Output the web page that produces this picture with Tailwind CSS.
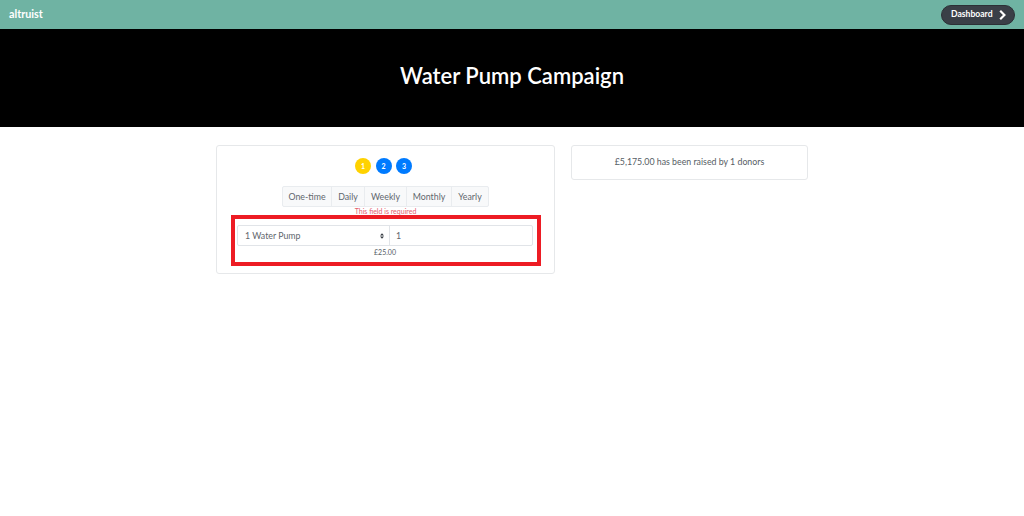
<!DOCTYPE html>
<html lang="en">
<head>
    <meta charset="UTF-8" />
    <meta name="viewport" content="width=device-width, initial-scale=1" />
    <title>Water Pump Campaign</title>
    <script src="https://cdn.jsdelivr.net/npm/@tailwindcss/browser@4"></script>
</head>
<body class="bg-white h-[516px] overflow-hidden font-['Lato','Noto_Sans',sans-serif] text-[#565d64]">

<!-- Barre du haut -->
<nav class="h-[29px] bg-[#6fb3a3] flex items-center justify-between pl-[9px] pr-[9px]">
    <a class="text-white font-bold text-[10.8px]">altruist</a>
    <a class="h-[20px] w-[74px] rounded-full bg-[#3a3f47] border border-[#2c3036] text-white text-[8.6px] font-bold flex items-center pl-[9px] gap-[6px]">
        Dashboard
        <svg width="7" height="10" viewBox="0 0 7 10" fill="none" stroke="white" stroke-width="2.2"><path d="M1.2 0.8 L5.4 5 L1.2 9.2" /></svg>
    </a>
</nav>

<!-- Titre -->
<header class="h-[98px] bg-black flex items-center justify-center pb-[5px]">
    <h1 class="text-white text-[22px] font-semibold">Water Pump Campaign</h1>
</header>

<main class="flex items-start pt-[18px] pl-[216px] gap-[16px]">
    <section class="w-[339px] h-[129px] border border-[#e6e8ea] rounded-[3px] flex flex-col items-center pt-[12px]">
        <div class="flex gap-[4.5px] mr-[4px]">
            <span class="w-[16px] h-[16px] rounded-full bg-[#ffd200] text-white text-[7px] font-bold flex items-center justify-center">1</span>
            <span class="w-[16px] h-[16px] rounded-full bg-[#007bff] text-white text-[7px] font-bold flex items-center justify-center">2</span>
            <span class="w-[16px] h-[16px] rounded-full bg-[#007bff] text-white text-[7px] font-bold flex items-center justify-center">3</span>
        </div>
        <div class="flex mt-[12px] h-[21px] border border-[#e9ecef] rounded-[2px] bg-[#f8f9fa] text-[8.8px] text-[#5f666d]">
            <span class="w-[49px] flex items-center justify-center border-r border-[#e9ecef]">One-time</span>
            <span class="w-[33px] flex items-center justify-center border-r border-[#e9ecef]">Daily</span>
            <span class="w-[42px] flex items-center justify-center border-r border-[#e9ecef]">Weekly</span>
            <span class="w-[45px] flex items-center justify-center border-r border-[#e9ecef]">Monthly</span>
            <span class="w-[36px] flex items-center justify-center">Yearly</span>
        </div>
        <p class="text-[7px] text-[#e4606d] leading-[8px]">This field is required</p>
        <div class="w-[310px] h-[51px] self-start ml-[14px] border-[4px] border-[#ed1c24] flex flex-col items-center pl-[2px] pr-[4px] pt-[6px]">
            <div class="w-full h-[21px] flex border border-[#e1e4e8] rounded-[2px] text-[8.8px] text-[#5f666d]">
                <div class="w-[152px] flex items-center justify-between pl-[7px] pr-[5px] border-r border-[#e1e4e8]">
                    <span>1 Water Pump</span>
                    <svg width="4" height="6" viewBox="0 0 5 7" fill="#343a40"><path d="M2.5 0 L5 2.8 H0 Z M2.5 7 L0 4.2 H5 Z" /></svg>
                </div>
                <div class="flex-1 flex items-center pl-[6px]">1</div>
            </div>
            <p class="text-[7px] leading-[10px] mt-[1px]">£25.00</p>
        </div>
    </section>

    <aside class="w-[237px] h-[35px] border border-[#e6e8ea] rounded-[3px] flex items-center justify-center text-[8.8px] pb-[1px]">
        £5,175.00 has been raised by 1 donors
    </aside>
</main>

</body>
</html>
